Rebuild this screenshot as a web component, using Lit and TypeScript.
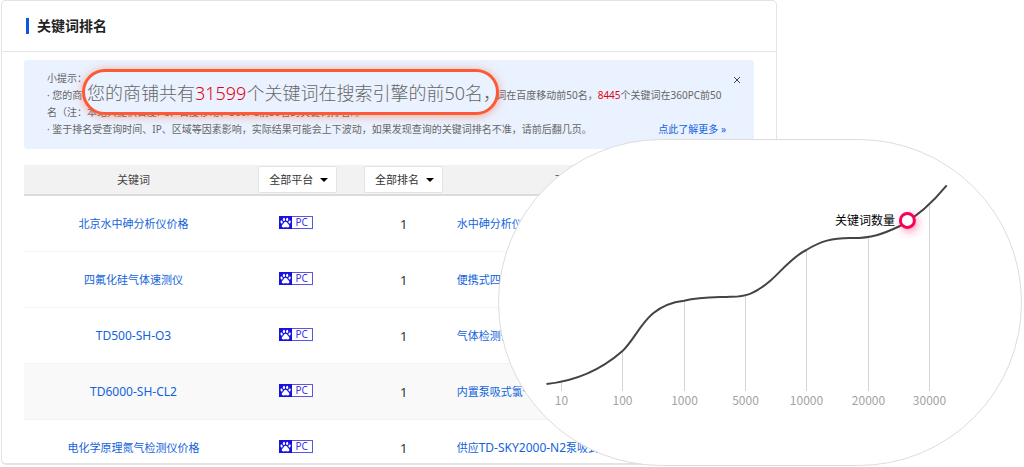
import { LitElement, html, svg, css } from "lit";
import { customElement } from "lit/decorators.js";

interface Row {
  keyword: string;
  rank: number;
  title: string;
  active?: boolean;
}

const rows: Row[] = [
  { keyword: "北京水中砷分析仪价格", rank: 1, title: "水中砷分析仪" },
  { keyword: "四氟化硅气体速测仪", rank: 1, title: "便携式四氟化硅" },
  { keyword: "TD500-SH-O3", rank: 1, title: "气体检测仪" },
  { keyword: "TD6000-SH-CL2", rank: 1, title: "内置泵吸式氯气", active: true },
  { keyword: "电化学原理氮气检测仪价格", rank: 1, title: "供应TD-SKY2000-N2泵吸式" },
];

// Model numbers are set one step larger than the Chinese text around them.
const mixed = (text: string) =>
  text
    .split(/([A-Z][A-Z0-9-]+)/)
    .filter(Boolean)
    .map((part) => (/^[A-Z]/.test(part) ? html`<span class="latin">${part}</span>` : part));

@customElement("pc-badge")
class PcBadge extends LitElement {
  static styles = css`
    :host {
      display: inline-flex;
      box-sizing: border-box;
      width: 34px;
      height: 13px;
      border: 1px solid #5a55e6;
      background: #fff;
      vertical-align: top;
    }
    .paw {
      width: 13px;
      height: 13px;
      margin: -1px 0 0 -1px;
      background: #1712dc;
      flex: none;
    }
    .name {
      flex: 1;
      font-size: 10px;
      line-height: 11px;
      text-align: center;
      color: #3a34dd;
    }
  `;
  render() {
    return html`
      <svg class="paw" viewBox="0 0 13 13" fill="#fff" aria-hidden="true">
        <ellipse cx="2.6" cy="6" rx="1.1" ry="1.5" transform="rotate(-15 2.6 6)" />
        <ellipse cx="5" cy="3.4" rx="1.1" ry="1.6" />
        <ellipse cx="8.2" cy="3.4" rx="1.1" ry="1.6" />
        <ellipse cx="10.6" cy="6" rx="1.1" ry="1.5" transform="rotate(15 10.6 6)" />
        <path d="M6.6 5.8C5.2 5.8 5 7.2 4 8.1C2.9 9 2.6 9.8 3 10.7C3.5 11.8 5.2 11.3 6.6 11.3C8 11.3 9.7 11.8 10.2 10.7C10.6 9.8 10.3 9 9.2 8.1C8.2 7.2 8 5.8 6.6 5.8Z" />
      </svg>
      <span class="name">PC</span>
    `;
  }
}

@customElement("filter-select")
class FilterSelect extends LitElement {
  static properties = { label: {} };
  declare label: string;
  static styles = css`
    :host {
      display: inline-grid;
      vertical-align: top;
      align-items: center;
    }
    .field {
      grid-area: 1 / 1;
      appearance: none;
      box-sizing: border-box;
      width: 79px;
      height: 27px;
      margin: 0;
      padding: 0 0 0 10px;
      border: 1px solid #e4e4e4;
      border-radius: 2px;
      background: #fff;
      color: #333;
      font: inherit;
      font-size: 11px;
    }
    .arrow {
      grid-area: 1 / 1;
      justify-self: end;
      width: 8px;
      height: 4px;
      margin-right: 9px;
      pointer-events: none;
    }
  `;
  render() {
    return html`
      <select class="field" aria-label=${this.label}>
        <option>${this.label}</option>
      </select>
      <svg class="arrow" viewBox="0 0 8 4" aria-hidden="true"><path d="M0 0h8L4 4z" /></svg>
    `;
  }
}

const ticks = [
  { x: 62.5, top: 241, label: "10" },
  { x: 123.5, top: 211, label: "100" },
  { x: 185.5, top: 161, label: "1000" },
  { x: 246.5, top: 154, label: "5000" },
  { x: 307.5, top: 110, label: "10000" },
  { x: 369.5, top: 97, label: "20000" },
  { x: 430.5, top: 64, label: "30000" },
];

@customElement("keyword-chart")
class KeywordChart extends LitElement {
  static styles = css`
    :host {
      display: block;
      box-sizing: border-box;
      border: 1px solid #dcdcdc;
      border-radius: 164px;
      background: #fff;
      overflow: hidden;
    }
    .plot {
      display: block;
      width: 100%;
      font-family: "Noto Sans CJK SC", sans-serif;
      font-size: 12px;
    }
    .tick {
      stroke: #d5d5d5;
    }
    .tick-label {
      fill: #a3a3a3;
      text-anchor: middle;
    }
    .curve {
      fill: none;
      stroke: #444;
      stroke-width: 2;
    }
    .series {
      fill: #000;
      text-anchor: end;
    }
    .marker {
      fill: #fff;
      stroke: #f9005a;
      stroke-width: 3;
      filter: drop-shadow(2px 3px 4px rgba(255, 0, 90, 0.4));
    }
  `;
  render() {
    return html`
      <svg class="plot" viewBox="0 0 522 325" role="img" aria-label="关键词数量">
        ${ticks.map(
          (t) => svg`
            <line class="tick" x1=${t.x} x2=${t.x} y1=${t.top} y2="251" />
            <text class="tick-label" x=${t.x} y="265">${t.label}</text>`
        )}
        <path
          class="curve"
          d="M47.5 244C77 241 103 229 123.5 211C140 196 146 165 185 160.7C203 156.5 222 157.5 231 156.7C246 157 256 154 271 141C281 132.5 293 117 307.3 110C322 101 333 98 351 98C372 98.5 384 94 401 86C419 76 434 62 447.7 45.3"
        />
        <circle class="marker" cx="408.4" cy="80.4" r="7" />
        <text class="series" x="396" y="85">关键词数量</text>
      </svg>
    `;
  }
}

@customElement("app-root")
class AppRoot extends LitElement {
  static styles = css`
    :host {
      display: block;
      position: relative;
      min-height: 467px;
      background: #fff;
      color: #666;
      font-family: "Noto Sans", "Noto Sans CJK SC", sans-serif;
      font-size: 11px;
      overflow: hidden;
    }
    .panel {
      margin: 0 247px 0 1px;
      border: 1px solid #e3e3e3;
      border-bottom-width: 2px;
      border-radius: 5px;
    }
    .head {
      display: flex;
      align-items: center;
      gap: 8px;
      padding: 15px 24px;
      border-bottom: 1px solid #e6e6e6;
    }
    .bar {
      width: 3px;
      height: 16px;
      background: #0b57e0;
    }
    .title {
      margin: 0;
      font-size: 14px;
      line-height: 20px;
      font-weight: 700;
      color: #222;
    }
    .body {
      padding: 8px 22px 0;
    }
    .tip {
      position: relative;
      padding: 10px 23px 11px;
      margin-bottom: 16px;
      border-radius: 3px;
      background: #eaf2ff;
      font-size: 10px;
      line-height: 17px;
      white-space: nowrap;
    }
    .line {
      margin: 0;
    }
    .last {
      display: flex;
      justify-content: space-between;
      padding-right: 5px;
    }
    .num {
      color: #e60012;
    }
    .link {
      color: #1263dc;
      text-decoration: none;
    }
    .latin {
      font-size: 12px;
    }
    .close {
      position: absolute;
      top: 12px;
      right: 9px;
      width: 16px;
      height: 16px;
      padding: 4px;
      border: 0;
      background: none;
    }
    .cross {
      display: block;
      width: 8px;
      height: 8px;
      stroke: #444;
    }
    .callout {
      position: absolute;
      top: 9px;
      left: 58px;
      box-sizing: border-box;
      height: 46px;
      padding: 0 0 0 2px;
      width: 417px;
      border: 3px solid #fc5a34;
      border-radius: 23px;
      background: #eaf2ff;
      box-shadow: 0 1px 9px rgba(252, 90, 52, 0.5);
      font-size: 18px;
      line-height: 42px;
      font-weight: 300;
    }
    .table {
      width: 100%;
      table-layout: fixed;
      border-spacing: 0;
    }
    .th {
      height: 29px;
      padding: 0;
      border-bottom: 2px solid #dcdcdc;
      background: #f2f2f2;
      color: #444;
      font-weight: 400;
      line-height: 16px;
    }
    .c-key {
      width: 30%;
    }
    .c-platform {
      width: 15%;
    }
    .c-rank {
      width: 14%;
    }
    .td {
      padding: 18px 0 17px;
      border-bottom: 1px solid #f4f4f4;
      line-height: 20px;
      text-align: center;
      vertical-align: top;
      white-space: nowrap;
    }
    .row:last-child .td {
      padding-bottom: 5px;
      border: 0;
    }
    .active .td {
      background: #f9f9f9;
    }
    .badge {
      margin: 2px 4px 0 0;
    }
    .rank {
      font-size: 13px;
      color: #333;
    }
    .name {
      padding-left: 2px;
      text-align: left;
    }
    .chart {
      position: absolute;
      top: 139px;
      right: 2px;
      width: 524px;
    }
  `;

  render() {
    return html`
      <section class="panel">
        <header class="head">
          <span class="bar"></span>
          <h1 class="title">关键词排名</h1>
        </header>
        <div class="body">
          <div class="tip">
            <p class="line">小提示：</p>
            <p class="line">
              · 您的商铺共有<span class="num">31599</span>个关键词在搜索引擎的前50名，其中<span class="num">912</span>个关键词在百度PC前50名，<span class="num">1434</span>个关键词在百度移动前50名，<span class="num">8445</span>个关键词在360PC前50
            </p>
            <p class="line">名（注：本站只提供百度PC、百度移动、360PC前50名的关键词排名）。</p>
            <div class="last">
              <span>· 鉴于排名受查询时间、IP、区域等因素影响，实际结果可能会上下波动，如果发现查询的关键词排名不准，请前后翻几页。</span>
              <a class="link" href="#more">点此了解更多 »</a>
            </div>
            <button class="close" aria-label="关闭">
              <svg class="cross" viewBox="0 0 8 8" aria-hidden="true"><path d="M1 1l6 6M7 1L1 7" /></svg>
            </button>
            <div class="callout">您的商铺共有<span class="num">31599</span>个关键词在搜索引擎的前50名，</div>
          </div>
          <table class="table">
            <thead>
              <tr>
                <th class="th c-key">关键词</th>
                <th class="th c-platform"><filter-select .label=${"全部平台"}></filter-select></th>
                <th class="th c-rank"><filter-select .label=${"全部排名"}></filter-select></th>
                <th class="th">百度收录的页面标题</th>
              </tr>
            </thead>
            <tbody>
              ${rows.map(
                (r) => html`
                  <tr class="row ${r.active ? "active" : ""}">
                    <td class="td"><a class="link" href="#keyword">${mixed(r.keyword)}</a></td>
                    <td class="td"><pc-badge class="badge"></pc-badge></td>
                    <td class="td rank">${r.rank}</td>
                    <td class="td name"><a class="link" href="#page">${mixed(r.title)}</a></td>
                  </tr>
                `
              )}
            </tbody>
          </table>
        </div>
      </section>
      <keyword-chart class="chart"></keyword-chart>
    `;
  }
}
